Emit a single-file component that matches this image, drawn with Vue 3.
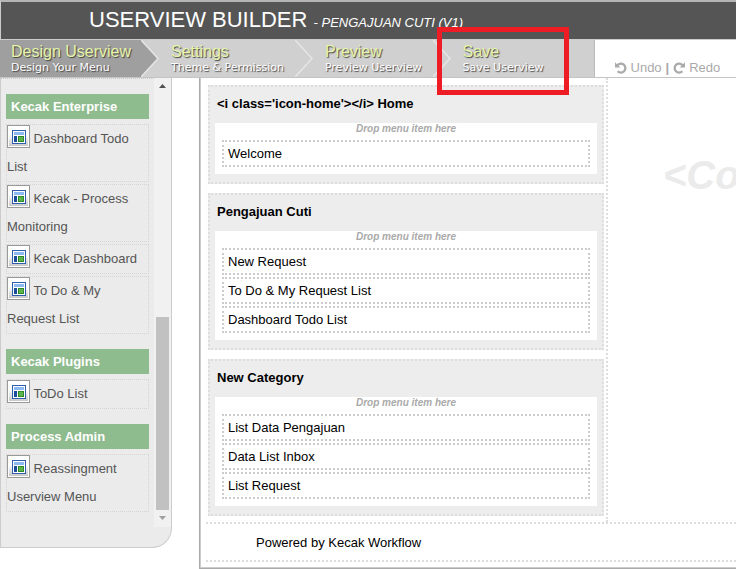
<script setup>
const steps = [
  { title: 'Design Userview', sub: 'Design Your Menu', state: 'active' },
  { title: 'Settings', sub: 'Theme & Permission', state: '' },
  { title: 'Preview', sub: 'Preview Userview', state: '' },
  { title: 'Save', sub: 'Save Userview', state: 'last' },
]

const palette = [
  {
    name: 'Kecak Enterprise',
    items: ['Dashboard Todo List', 'Kecak - Process Monitoring', 'Kecak Dashboard', 'To Do & My Request List'],
  },
  { name: 'Kecak Plugins', items: ['ToDo List'] },
  { name: 'Process Admin', items: ['Reassingment Userview Menu'] },
]

const categories = [
  { name: "<i class='icon-home'></i> Home", menus: ['Welcome'] },
  { name: 'Pengajuan Cuti', menus: ['New Request', 'To Do & My Request List', 'Dashboard Todo List'] },
  { name: 'New Category', menus: ['List Data Pengajuan', 'Data List Inbox', 'List Request'] },
]

const placeholder = '<Co'
</script>

<template>
  <div class="builder">
    <header class="header">
      <h1>USERVIEW BUILDER <em>- PENGAJUAN CUTI (V1)</em></h1>
    </header>

    <div class="toolbar">
      <nav class="steps">
        <a v-for="step in steps" :key="step.title" href="#" class="step" :class="step.state">
          <span class="step-title">{{ step.title }}</span>
          <span class="step-sub">{{ step.sub }}</span>
          <svg v-if="step.state !== 'last'" class="arrow" viewBox="0 0 18 37" aria-hidden="true">
            <path v-if="step.state === 'active'" d="M0 0L17 18.500L0 37Z" fill="#9f9f9f" />
            <path d="M0 0L17 18.500L0 37" fill="none" stroke="#e6e6e6" stroke-width="1.500" />
          </svg>
          <span v-else class="highlight"></span>
        </a>
      </nav>
      <div class="history">
        <button type="button">
          <svg viewBox="0 0 12 12" aria-hidden="true">
            <path d="M2.300 3.300A4.500 4.500 0 1 1 2.600 9.200" fill="none" stroke="#aaa" stroke-width="2.300" />
            <path d="M0 0.300V5.500H5.300Z" fill="#aaa" />
          </svg>
          Undo
        </button>
        <b>|</b>
        <button type="button">
          <svg viewBox="0 0 12 12" aria-hidden="true">
            <path d="M9.700 3.300A4.500 4.500 0 1 0 9.400 9.200" fill="none" stroke="#aaa" stroke-width="2.300" />
            <path d="M12 0.300V5.500H6.700Z" fill="#aaa" />
          </svg>
          Redo
        </button>
      </div>
    </div>

    <main class="workspace">
      <aside class="sidebar">
        <div class="scroller">
          <div class="palette">
            <section v-for="group in palette" :key="group.name">
              <h2>{{ group.name }}</h2>
              <ul>
                <li v-for="item in group.items" :key="item">
                  <svg class="item-icon" viewBox="0 0 23 23" aria-hidden="true">
                    <defs>
                      <linearGradient id="tile" x1="0" y1="0" x2="0" y2="1">
                        <stop offset="0.400" stop-color="#fff" />
                        <stop offset="1" stop-color="#c8c8c8" />
                      </linearGradient>
                    </defs>
                    <rect x="0.500" y="0.500" width="22" height="22" fill="#fff" stroke="#999" />
                    <rect x="2" y="2" width="19" height="19" fill="url(#tile)" />
                    <rect x="5.500" y="5.500" width="13" height="13" fill="#fff" stroke="#2d5fae" />
                    <rect x="7" y="7" width="10" height="3" fill="#8db9f2" />
                    <rect x="7" y="11" width="3" height="6" fill="#1c4c9e" />
                    <rect x="11.500" y="11.500" width="5" height="5" fill="#5cb54c" stroke="#2f8a2a" />
                  </svg>
                  {{ item }}
                </li>
              </ul>
            </section>
          </div>
          <div class="scrollbar" aria-hidden="true">
            <svg viewBox="0 0 17 17"><path d="M5 10H12L8.500 6Z" fill="#505050" /></svg>
            <span class="thumb"></span>
            <svg viewBox="0 0 17 17"><path d="M5 6H12L8.500 10Z" fill="#a0a0a0" /></svg>
          </div>
        </div>
      </aside>

      <div class="canvas">
        <div class="canvas-body">
          <div class="menu">
            <section v-for="cat in categories" :key="cat.name" class="category">
              <h3>{{ cat.name }}</h3>
              <div class="drop">
                <p>Drop menu item here</p>
                <ul>
                  <li v-for="menu in cat.menus" :key="menu">{{ menu }}</li>
                </ul>
              </div>
            </section>
          </div>
          <div class="content">{{ placeholder }}</div>
        </div>
        <footer>Powered by Kecak Workflow</footer>
      </div>
    </main>
  </div>
</template>

<style>
body {
  background: #fff;
}
</style>

<style scoped>
.builder {
  font: 13px/15px "Liberation Sans", Arial, sans-serif;
  color: #000;
  overflow: hidden;
}
h1, h2, h3, p, ul {
  margin: 0;
  padding: 0;
  list-style: none;
}
.header {
  box-sizing: border-box;
  height: 40px;
  padding-left: 88px;
  background: #555;
  border-top: 2px solid #b5b5b5;
  border-bottom: 1px solid #ccc;
  border-left: 1px solid #ccc;
}
h1 {
  font-size: 22px;
  font-weight: 400;
  line-height: 36px;
  color: #fff;
  white-space: nowrap;
}
h1 em {
  font-size: 13px;
}
.toolbar {
  display: flex;
  height: 37px;
  border-bottom: 1px solid #c4c4c4;
}
.steps {
  display: flex;
  background: #d0d0d0;
  border-right: 1px solid #bbb;
}
.step {
  position: relative;
  display: flex;
  flex-direction: column;
  padding: 3px 29px 0 12px;
  text-decoration: none;
  text-shadow: 1px 1px 1px #444;
  white-space: nowrap;
}
.step.active {
  padding: 3px 28px 0 11px;
  background: linear-gradient(90deg, #9f9f9f calc(100% - 18px), transparent calc(100% - 18px));
}
.step.last {
  padding-right: 50px;
}
.step-title {
  font-size: 16px;
  line-height: 18px;
  color: #e6f5a9;
}
.step-sub {
  font: 11px/13px "DejaVu Sans", Verdana, sans-serif;
  color: #fff;
}
.arrow {
  position: absolute;
  top: 0;
  right: 0;
  width: 18px;
  height: 37px;
}
.highlight {
  position: absolute;
  inset: -13px 25px -18px -14px;
  border: 5px solid #ee1c25;
  z-index: 2;
}
.history {
  display: flex;
  align-items: flex-end;
  gap: 4px;
  padding: 0 0 2px 20px;
  color: #aaa;
}
.history button {
  display: flex;
  align-items: center;
  gap: 4px;
  padding: 0;
  border: 0;
  background: none;
  font: inherit;
  color: inherit;
}
.history svg {
  width: 12px;
  height: 12px;
}
.workspace {
  display: flex;
  align-items: flex-start;
  gap: 27px;
}
.sidebar {
  box-sizing: border-box;
  flex: none;
  width: 172px;
  padding-bottom: 20px;
  background: #ebebeb;
  border: 1px solid #ccc;
  border-top: 0;
  border-radius: 0 0 20px 0;
}
.scroller {
  display: flex;
}
.palette {
  flex: 1;
  padding: 15px 5px;
  border-top: 1px dotted #ccc;
}
.palette section + section {
  margin-top: 15px;
}
h2 {
  margin-bottom: 5px;
  padding: 0 5px;
  background: #8fbc8f;
  font-size: 13px;
  line-height: 25px;
  color: #fff;
}
.palette ul {
  display: grid;
  gap: 2px;
}
.palette li {
  border: 1px dotted #d4d4d4;
  line-height: 28px;
  color: #555;
}
.item-icon {
  width: 23px;
  height: 23px;
  vertical-align: -5px;
}
.scrollbar {
  display: flex;
  flex-direction: column;
  width: 17px;
  background: #f1f1f1;
}
.scrollbar svg {
  width: 17px;
  height: 17px;
}
.thumb {
  width: 13px;
  height: 43%;
  margin: auto 2px 0;
  background: #c1c1c1;
}
.canvas {
  flex: 1;
  min-width: 0;
  padding: 0 0 6px 6px;
  border-left: 1px solid #aaa;
  border-bottom: 1px solid #aaa;
  box-shadow: inset 1px -1px #ccc;
}
.canvas-body {
  display: flex;
}
.menu {
  box-sizing: border-box;
  flex: none;
  width: 402px;
  display: grid;
  gap: 9px;
  padding: 7px 2px 6px;
  border-right: 2px dotted #ddd;
}
.category {
  padding: 0 5px 8px;
  background: #ededed;
  border: 2px dotted #ddd;
}
h3 {
  padding: 0 0 2px 2px;
  font-size: 13px;
  line-height: 34px;
}
.drop {
  padding: 0 7px 7px;
  background: #fff;
}
.drop p {
  font: italic bold 10px/12px "Liberation Sans", Arial, sans-serif;
  padding-bottom: 5px;
  text-align: center;
  color: #aaa;
}
.drop ul {
  display: grid;
  gap: 2px;
}
.drop li {
  padding: 0 4px;
  border: 2px dotted #ccc;
  line-height: 23px;
}
.content {
  flex: 1;
  min-width: 0;
  overflow: hidden;
  padding: 74px 0 0 55px;
  font: italic bold 40px/46px "Liberation Sans", Arial, sans-serif;
  color: #ebebeb;
}
footer {
  padding: 2px 0 0 50px;
  border-top: 2px dotted #ddd;
  border-bottom: 2px dotted #ddd;
  line-height: 34px;
}
</style>
